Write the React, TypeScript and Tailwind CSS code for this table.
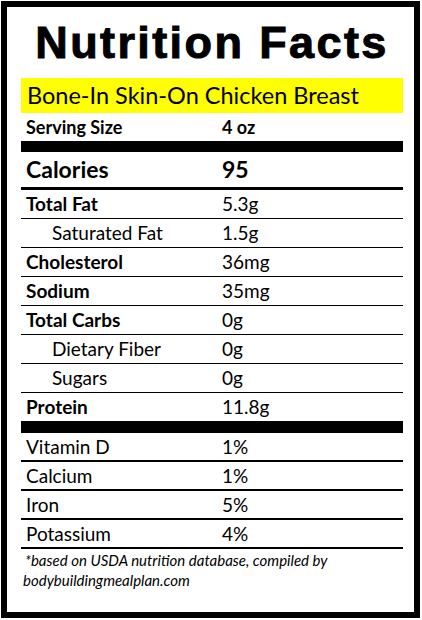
import React from "react";

type Row = { label: string; value: string; bold?: boolean; indent?: boolean };

const nutrients: Row[] = [
  { label: "Total Fat", value: "5.3g", bold: true },
  { label: "Saturated Fat", value: "1.5g", indent: true },
  { label: "Cholesterol", value: "36mg", bold: true },
  { label: "Sodium", value: "35mg", bold: true },
  { label: "Total Carbs", value: "0g", bold: true },
  { label: "Dietary Fiber", value: "0g", indent: true },
  { label: "Sugars", value: "0g", indent: true },
  { label: "Protein", value: "11.8g", bold: true },
];

const vitamins: Row[] = [
  { label: "Vitamin D", value: "1%" },
  { label: "Calcium", value: "1%" },
  { label: "Iron", value: "5%" },
  { label: "Potassium", value: "4%" },
];

function Line() {
  return <div className="h-[1.5px] w-full bg-black" />;
}

function RowView({ r }: { r: Row }) {
  return (
    <div className="flex items-center h-[27.5px] text-[19px] leading-none">
      <div
        className={`${r.indent ? "pl-[31px]" : "pl-[5px]"} w-[201px] ${
          r.bold ? "font-bold" : "font-normal"
        }`}
      >
        {r.label}
      </div>
      <div className="font-normal">{r.value}</div>
    </div>
  );
}

export default function App() {
  return (
    <div className="w-[422px] h-[620px] bg-white pt-[1px] pl-[1px]">
      <div
        className="w-[419px] h-[617px] border-[6px] border-black bg-white text-black"
        style={{ fontFamily: "Lato, 'Open Sans', sans-serif" }}
      >
        <div className="pl-[14px] w-[396px]">
          <div className="h-[71px] flex items-center justify-center">
            <div
              className="text-[45px] leading-none font-bold tracking-[2.4px]"
              style={{
                fontFamily: "'Liberation Sans', Arial, sans-serif",
                WebkitTextStroke: "1px black",
              }}
            >
              Nutrition Facts
            </div>
          </div>
          <div className="w-[382px]">
            <div className="h-[35px] bg-[#ffff00] flex items-center pl-[6px] text-[23.5px] leading-none">
              Bone-In Skin-On Chicken Breast
            </div>
            <div className="h-[28px] flex items-center text-[18px] leading-none font-bold">
              <div className="pl-[5px] w-[201px]">Serving Size</div>
              <div>4 oz</div>
            </div>
            <div className="h-[11px] bg-black" />
            <div className="h-[35px] flex items-center text-[23px] leading-none font-bold">
              <div className="pl-[5px] w-[201px]">Calories</div>
              <div>95</div>
            </div>
            <div className="h-[3px] bg-black" />
            {nutrients.map((r, i) => (
              <div key={r.label}>
                <RowView r={r} />
                {i < nutrients.length - 1 && <Line />}
              </div>
            ))}
            <div className="h-[12px] bg-black" />
            {vitamins.map((r) => (
              <div key={r.label}>
                <RowView r={r} />
                <Line />
              </div>
            ))}
            <div className="pt-[1px] pl-[4px] text-[15px] leading-[20px] italic">
              <div>*based on USDA nutrition database, compiled by</div>
              <div className="-ml-[2px]">bodybuildingmealplan.com</div>
            </div>
          </div>
        </div>
      </div>
    </div>
  );
}
